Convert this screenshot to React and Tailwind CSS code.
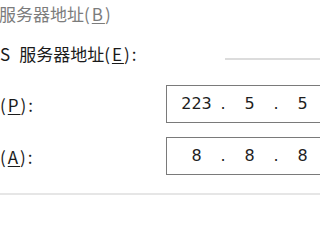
import React from 'react';

const labelFont = { fontFamily: '"Noto Sans CJK SC", "Noto Sans", sans-serif' };

const IpBox = ({ parts }) => (
  <div className="flex h-[38px] w-[170px] shrink-0 items-center border border-[#7a7a7a] bg-white pl-[6px] font-['DejaVu_Sans',sans-serif] text-[16px] text-[#1e1e1e]">
    {parts.map((p, i) => (
      <React.Fragment key={i}>
        {i > 0 && <span className="w-[6px] text-center">.</span>}
        <span className="w-[47px] text-center">{p}</span>
      </React.Fragment>
    ))}
  </div>
);

// "(X)" access key, letter underlined like Win32 labels
const Mnemonic = ({ ch, colon }) => (
  <span className="tracking-[2px]">
    (<span className="underline underline-offset-2">{ch}</span>){colon && ':'}
  </span>
);

export default function App() {
  return (
    <div className="h-[200px] w-[320px] overflow-hidden bg-white text-[17px]" style={labelFont}>
      <div className="flex h-[28px] items-center text-[#7c7c7c]">
        <span className="-ml-[1px] whitespace-nowrap">服务器地址<Mnemonic ch="B" /></span>
      </div>

      <div className="mt-[13px] flex h-[26px] items-center text-[#1a1a1a]">
        <span className="w-[225px] shrink-0 whitespace-nowrap">
          <span className="mr-[9px]">S</span>服务器地址<Mnemonic ch="E" colon />
        </span>
        <div className="mt-[10px] h-[2px] flex-1 bg-[#dcdcdc]" />
      </div>

      <div className="mt-[18px] flex items-center text-[#1a1a1a]">
        <span className="w-[166px] shrink-0 pt-[2px]">
          <Mnemonic ch="P" colon />
        </span>
        <IpBox parts={['223', '5', '5']} />
      </div>

      <div className="mt-[14px] flex items-center text-[#1a1a1a]">
        <span className="w-[166px] shrink-0 pt-[2px]">
          <Mnemonic ch="A" colon />
        </span>
        <IpBox parts={['8', '8', '8']} />
      </div>

      <div className="mt-[18px] h-[2px] w-full bg-[#e6e6e6]" />
    </div>
  );
}
